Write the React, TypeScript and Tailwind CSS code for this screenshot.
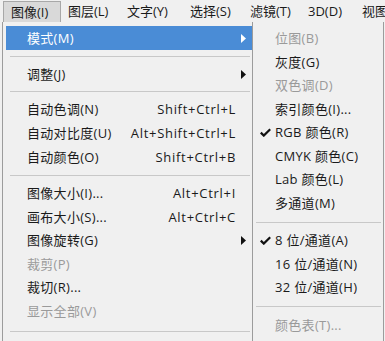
const font = { fontFamily: '"Open Sans", "Noto Sans CJK SC", sans-serif' };

type MainRow = { label: string; shortcut?: string; sub?: boolean; disabled?: boolean; active?: boolean; h: string };

function Arrow({ white }: { white?: boolean }) {
  return (
    <svg width="5" height="9" viewBox="0 0 5 9" className="shrink-0">
      <path d="M0 0 L5 4.5 L0 9 Z" fill={white ? "#ffffff" : "#111111"} />
    </svg>
  );
}

function Check() {
  return (
    <svg width="11" height="9" viewBox="0 0 11 9">
      <path d="M0.8 4.6 L3.8 7.6 L10.2 1.2" stroke="#111" strokeWidth="2.2" fill="none" />
    </svg>
  );
}

function Sep({ h, inset }: { h: string; inset: string }) {
  return (
    <div className={`${h} flex items-center ${inset}`}>
      <div className="h-px w-full bg-[#c8c8c8]" />
    </div>
  );
}

function Row({ label, shortcut, sub, disabled, active, h }: MainRow) {
  return (
    <div
      className={`${h} flex items-center pl-[21px] pr-[6px] ${
        active ? "bg-[#4a8cd6] text-white" : disabled ? "text-[#9a9a9a]" : "text-[#1a1a1a]"
      }`}
    >
      <span className="flex-1 whitespace-nowrap tracking-[0.3px]">{label}</span>
      {shortcut && <span className="whitespace-nowrap pr-[10px] tracking-[0.7px]">{shortcut}</span>}
      {sub && <Arrow white={active} />}
    </div>
  );
}

function SubRow({ label, check, disabled, h }: { label: string; check?: boolean; disabled?: boolean; h: string }) {
  return (
    <div className={`${h} flex items-center ${disabled ? "text-[#9a9a9a]" : "text-[#1a1a1a]"}`}>
      <span className="w-[22px] flex justify-center pl-[3px]">{check && <Check />}</span>
      <span className="whitespace-nowrap tracking-[0.3px]">{label}</span>
    </div>
  );
}

const menus = [
  { label: "图像(I)", w: "w-[58px]", active: true },
  { label: "图层(L)", w: "w-[59px]" },
  { label: "文字(Y)", w: "w-[63px]" },
  { label: "选择(S)", w: "w-[60px]" },
  { label: "滤镜(T)", w: "w-[58px]" },
  { label: "3D(D)", w: "w-[54px]" },
  { label: "视图", w: "w-[40px]" },
];

export default function App() {
  return (
    <div className="w-[385px] h-[341px] overflow-hidden bg-[#f0f0f0] text-[13px] leading-none" style={font}>
      <div className="h-[22px] flex items-stretch pl-[3px] pt-[1px] text-[#1a1a1a]">
        {menus.map((m) => (
          <div
            key={m.label}
            className={`${m.w} shrink-0 flex items-center pl-[7px] whitespace-nowrap ${
              m.active ? "bg-[#d9d9d9] border border-[#a8a8a8] border-b-0 pl-[6px]" : ""
            }`}
          >
            {m.label}
          </div>
        ))}
      </div>
      <div className="flex h-[319px]">
        <div className="w-[250px] ml-[2px] border-l border-[#9c9c9c] pl-[3px] pt-[4px]">
          <Row label="模式(M)" sub active h="h-[24px]" />
          <Sep h="h-[12px]" inset="pl-[4px] pr-[2px]" />
          <Row label="调整(J)" sub h="h-[24px]" />
          <Sep h="h-[11px]" inset="pl-[4px] pr-[2px]" />
          <Row label="自动色调(N)" shortcut="Shift+Ctrl+L" h="h-[24px]" />
          <Row label="自动对比度(U)" shortcut="Alt+Shift+Ctrl+L" h="h-[24px]" />
          <Row label="自动颜色(O)" shortcut="Shift+Ctrl+B" h="h-[24px]" />
          <Sep h="h-[13px]" inset="pl-[4px] pr-[2px]" />
          <Row label="图像大小(I)..." shortcut="Alt+Ctrl+I" h="h-[23.5px]" />
          <Row label="画布大小(S)..." shortcut="Alt+Ctrl+C" h="h-[23.5px]" />
          <Row label="图像旋转(G)" sub h="h-[23.5px]" />
          <Row label="裁剪(P)" disabled h="h-[23.5px]" />
          <Row label="裁切(R)..." h="h-[23.5px]" />
          <Row label="显示全部(V)" disabled h="h-[23.5px]" />
          <Sep h="h-[16px]" inset="pl-[4px] pr-[2px]" />
        </div>
        <div className="w-[132px] border-l border-r border-[#9c9c9c] pt-[5px] pr-[2px]">
          <SubRow label="位图(B)" disabled h="h-[23.5px]" />
          <SubRow label="灰度(G)" h="h-[23.5px]" />
          <SubRow label="双色调(D)" disabled h="h-[23.5px]" />
          <SubRow label="索引颜色(I)..." h="h-[23.5px]" />
          <SubRow label="RGB 颜色(R)" check h="h-[23.5px]" />
          <SubRow label="CMYK 颜色(C)" h="h-[23.5px]" />
          <SubRow label="Lab 颜色(L)" h="h-[23.5px]" />
          <SubRow label="多通道(M)" h="h-[23.5px]" />
          <Sep h="h-[14px]" inset="pl-[3px]" />
          <SubRow label="8 位/通道(A)" check h="h-[23.5px]" />
          <SubRow label="16 位/通道(N)" h="h-[23.5px]" />
          <SubRow label="32 位/通道(H)" h="h-[23.5px]" />
          <Sep h="h-[14px]" inset="pl-[3px]" />
          <SubRow label="颜色表(T)..." disabled h="h-[23.5px]" />
        </div>
      </div>
    </div>
  );
}
